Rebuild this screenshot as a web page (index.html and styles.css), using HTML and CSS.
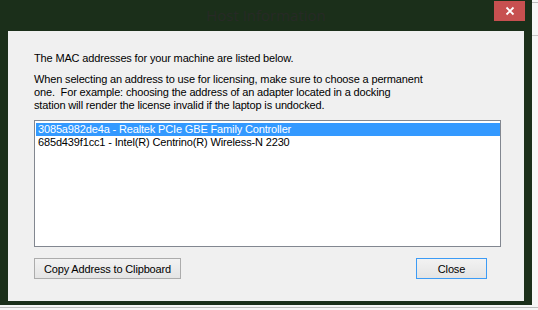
FILE: index.html
```html
<!DOCTYPE html>
<html lang="en">
<head>
    <meta charset="UTF-8">
    <title>Host Information</title>
    <link rel="stylesheet" href="styles.css">
</head>
<body>
    <div class="window">
        <div class="titlebar">
            <span class="title">Host Information</span>
            <button class="close-x" title="Close">
                <svg width="10" height="10" viewBox="0 0 10 10">
                    <path d="M1.5 1.5 L8.5 8.5 M8.5 1.5 L1.5 8.5" stroke="#fff" stroke-width="1.8" fill="none"/>
                </svg>
            </button>
        </div>

        <div class="dialog">
            <p class="intro">The MAC addresses for your machine are listed below.</p>
            <p class="note">
                When selecting an address to use for licensing, make sure to choose a permanent<br>
                one.&nbsp; For example: choosing the address of an adapter located in a docking<br>
                station will render the license invalid if the laptop is undocked.
            </p>

            <ul class="mac-list">
                <li class="selected">3085a982de4a - Realtek PCIe GBE Family Controller</li>
                <li>685d439f1cc1 - Intel(R) Centrino(R) Wireless-N 2230</li>
            </ul>

            <div class="actions">
                <button class="btn btn-copy">Copy Address to Clipboard</button>
                <button class="btn btn-default">Close</button>
            </div>
        </div>
    </div>
</body>
</html>
```

FILE: styles.css
```css
:root {
    --frame: #1b2f1a;
    --face: #f0f0f0;
    --border: #828790;
    --select: #3399ff;
    --btn-border: #acacac;
    --focus: #3c9bf5;
}

body {
    margin: 0;
    font-family: "Liberation Sans", Arial, sans-serif;
    font-size: 11px;
    letter-spacing: -0.15px;
    color: #000;
    background:
        linear-gradient(to bottom,
            transparent 2px, #bdbdbd 2px, #bdbdbd 3px, transparent 3px,
            transparent 35px, #c8c8c8 35px, #c8c8c8 36px, transparent 36px),
        #f6f6f6;
}

.window {
    width: 532px;
    height: 305px;
    box-sizing: border-box;
    padding: 0 8px 4px;
    background: var(--frame);
    display: flex;
    flex-direction: column;
}

.titlebar {
    height: 31px;
    margin: 0 -8px;
    display: grid;
    grid-template-columns: 38px 1fr 38px;
}

.title {
    grid-column: 2;
    margin-top: 5px;
    text-align: center;
    font-family: "Open Sans", "Noto Sans", sans-serif;
    font-size: 15px;
    line-height: 20px;
    letter-spacing: 0;
    color: #272a26;
}

.close-x {
    grid-column: 3;
    justify-self: start;
    width: 31px;
    height: 20px;
    margin-top: 1px;
    padding: 0;
    border: none;
    background: #c75050;
    display: flex;
    align-items: center;
    justify-content: center;
}

.dialog {
    flex: 1;
    background: var(--face);
    padding: 21px 23px 0 26px;
    display: flex;
    flex-direction: column;
}

.intro,
.note {
    margin: 0;
    line-height: 13px;
}

.note {
    margin-top: 8px;
}

.mac-list {
    list-style: none;
    margin: 8px 0 0;
    padding: 2px 0 0 1px;
    height: 127px;
    box-sizing: border-box;
    border: 1px solid var(--border);
    background: #fff;
}

.mac-list li {
    height: 13px;
    line-height: 13px;
    padding-left: 2px;
    white-space: nowrap;
}

.mac-list .selected {
    background: var(--select);
    color: #fff;
}

.actions {
    margin-top: 11px;
    padding-right: 14px;
    display: flex;
    justify-content: space-between;
}

.btn {
    height: 21px;
    padding: 0;
    font: inherit;
    letter-spacing: inherit;
    color: #000;
    border: 1px solid var(--btn-border);
    background: linear-gradient(#f2f2f2, #e4e4e4);
}

.btn-copy {
    width: 147px;
}

.btn-default {
    width: 71px;
    border-color: var(--focus);
}
```
